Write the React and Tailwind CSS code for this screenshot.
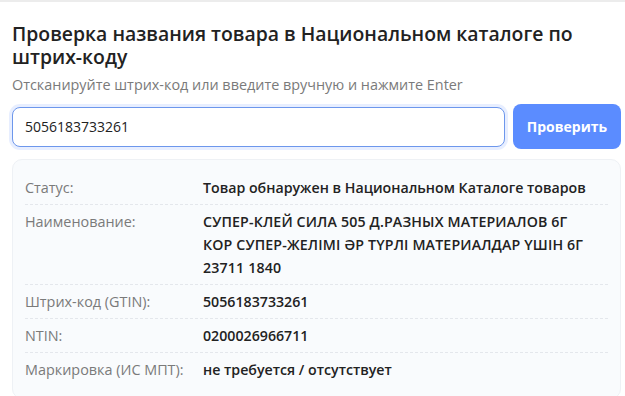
import React from "react";

const rows = [
  { label: "Статус:", value: ["Товар обнаружен в Национальном Каталоге товаров"] },
  {
    label: "Наименование:",
    caps: true,
    value: [
      "СУПЕР-КЛЕЙ СИЛА 505 Д.РАЗНЫХ МАТЕРИАЛОВ 6Г",
      "КОР СУПЕР-ЖЕЛІМІ ӘР ТҮРЛІ МАТЕРИАЛДАР ҮШІН 6Г",
      "23711 1840",
    ],
  },
  { label: "Штрих-код (GTIN):", value: ["5056183733261"] },
  { label: "NTIN:", value: ["0200026966711"] },
  { label: "Маркировка (ИС МПТ):", value: ["не требуется / отсутствует"] },
];

export default function App() {
  return (
    <div
      className="w-[625px] h-[396px] overflow-hidden bg-white border-t-2 border-[#ececec]"
      style={{ fontFamily: '"Open Sans", "Noto Sans", sans-serif' }}
    >
      <div className="pl-3 pr-1 pt-[20px]">
        <h1 className="text-[19.4px] leading-[23px] font-semibold text-[#222]">
          Проверка названия товара в Национальном каталоге по штрих-коду
        </h1>
        <p className="mt-[8px] text-[14.4px] leading-[18px] text-[#7a7a7a]">
          Отсканируйте штрих-код или введите вручную и нажмите Enter
        </p>
        <div className="mt-[10px] flex items-center gap-2">
          <div className="flex-1 h-[40px] rounded-[8px] border border-[#6d97ec] bg-white shadow-[0_0_0_3px_rgba(91,140,255,0.15)] flex items-center px-3 text-[14px] text-[#222]">
            5056183733261
          </div>
          <button className="w-[108px] h-[45px] rounded-[8px] bg-[#5b8cff] text-white text-[14px] font-bold">
            Проверить
          </button>
        </div>
        <div className="mt-[10px] rounded-[10px] border border-[#eef1f5] bg-[#f9fbfd] px-[12px] pt-[11px] pb-3">
          {rows.map((r, i) => (
            <div
              key={r.label}
              className={`flex py-[5px] leading-[23px] ${
                i < rows.length - 1 ? "border-b border-dashed border-[#e4e7ec]" : ""
              }`}
            >
              <div className="w-[178px] shrink-0 text-[14.4px] text-[#7a7a7a]">{r.label}</div>
              <div
                className={`flex-1 text-[14.2px] font-semibold text-[#222] ${
                  r.caps ? "tracking-[0.15px]" : ""
                }`}
              >
                {r.value.map((v) => (
                  <div key={v}>{v}</div>
                ))}
              </div>
            </div>
          ))}
        </div>
      </div>
    </div>
  );
}
